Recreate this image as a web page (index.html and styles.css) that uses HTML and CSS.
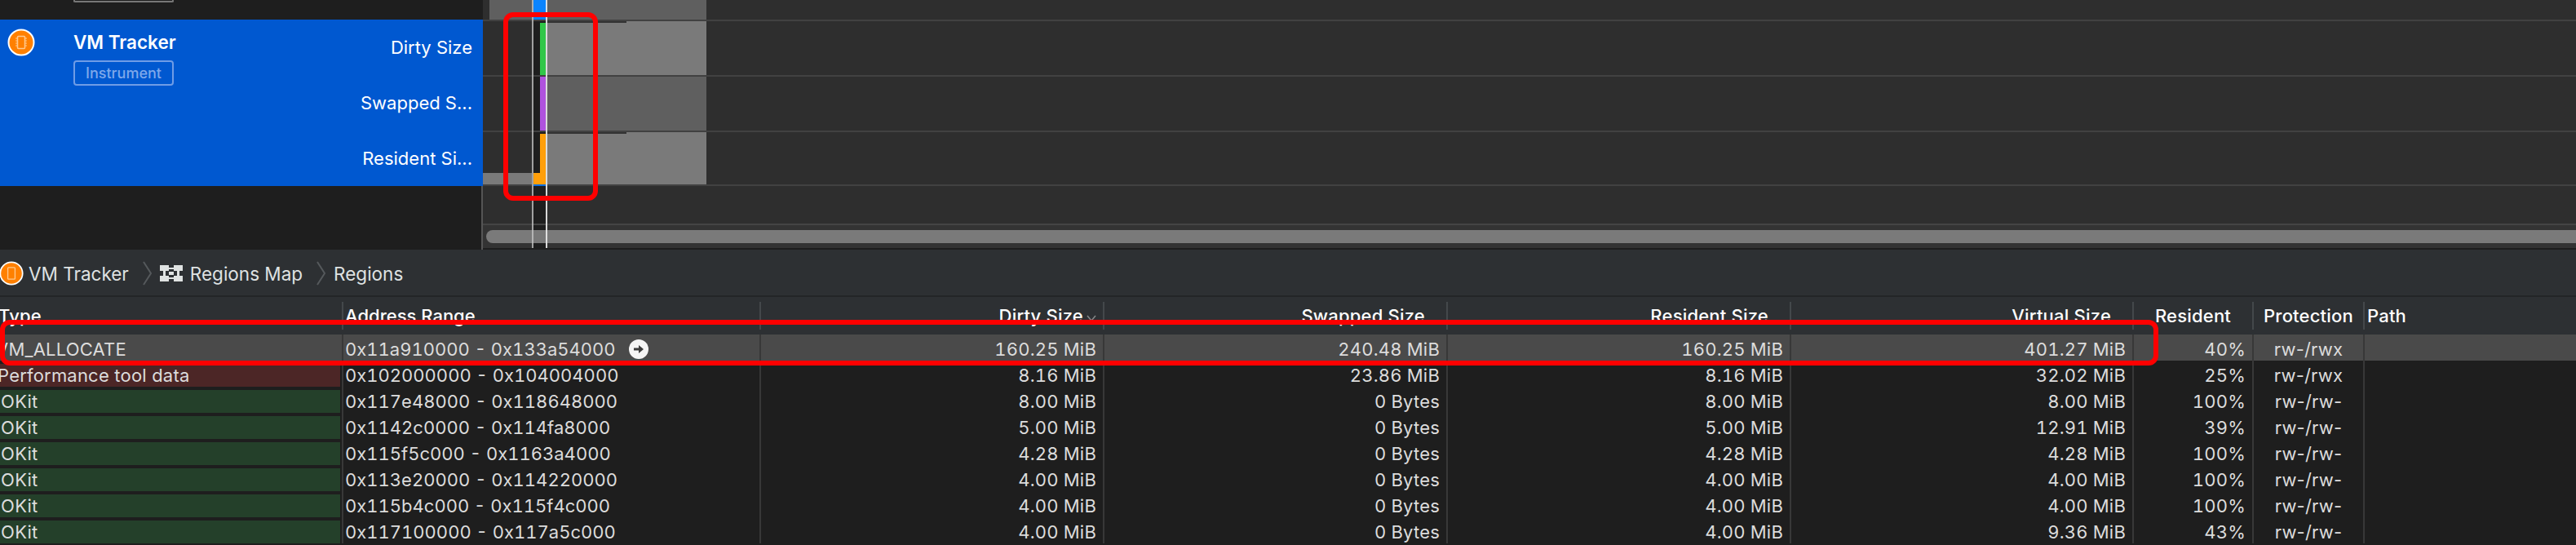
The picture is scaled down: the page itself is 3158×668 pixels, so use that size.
FILE: index.html
```html
<!DOCTYPE html>
<html lang="en">
<head>
<meta charset="UTF-8">
<title>VM Tracker</title>
<link rel="stylesheet" href="styles.css">
</head>
<body>

<div class="timeline">
    <div class="tracks">
        <div class="tracks-top">
            <div class="badge badge-prev"></div>
        </div>
        <div class="track-selected">
            <div class="icon-wrap">
                <svg class="orange-icon" width="34" height="34" viewBox="0 0 34 34">
                    <circle cx="17" cy="17" r="15.5" fill="#ff8000" stroke="#fff" stroke-width="2"/>
                    <rect x="12.5" y="9.5" width="9" height="15" rx="1" fill="none" stroke="#ffc98f" stroke-width="1.5"/>
                    <path d="M10 12h2M10 15h2M10 18h2M10 21h2M22 12h2M22 15h2M22 18h2M22 21h2" stroke="#ffc98f" stroke-width="1"/>
                </svg>
            </div>
            <div class="track-info">
                <div class="track-name">VM Tracker</div>
                <div class="badge">Instrument</div>
            </div>
            <div class="track-labels">
                <div>Dirty Size</div>
                <div>Swapped S...</div>
                <div>Resident Si...</div>
            </div>
        </div>
        <div class="tracks-rest"></div>
    </div>

    <div class="graph">
        <div class="lane lane-top">
            <div class="seg w8"></div>
            <div class="seg w54 mid"></div>
            <div class="col blue"></div>
            <div class="seg w196 mid"></div>
        </div>
        <div class="sep"></div>
        <div class="lane lane-1">
            <div class="seg w62"></div>
            <div class="col"><div class="bar green"></div></div>
            <div class="seg w98 light strip"></div>
            <div class="seg w98 light"></div>
        </div>
        <div class="sep"></div>
        <div class="lane lane-2">
            <div class="seg w62"></div>
            <div class="col"><div class="bar purple"></div></div>
            <div class="seg w196 mid"></div>
        </div>
        <div class="sep"></div>
        <div class="lane lane-3">
            <div class="seg w62"><div class="foot"></div></div>
            <div class="col"><div class="step"></div><div class="bar orange"></div></div>
            <div class="seg w98 light strip"></div>
            <div class="seg w98 light"></div>
        </div>
        <div class="sep sep-last"><div class="sep-blue"></div></div>
        <div class="lane lane-empty">
            <div class="seg w62"></div>
            <div class="col"></div>
        </div>
        <div class="scroll-row">
            <div class="seg w62"></div>
            <div class="col"></div>
            <div class="thumb"></div>
        </div>
        <div class="line line-a"></div>
        <div class="line line-b"></div>
    </div>
</div>

<div class="crumbs">
    <svg class="orange-icon crumb-icon" width="30" height="30" viewBox="0 0 34 34">
        <circle cx="17" cy="17" r="15.5" fill="#ff8000" stroke="#fff" stroke-width="2"/>
        <rect x="12" y="9" width="10" height="16" rx="1" fill="none" stroke="#ffc98f" stroke-width="1.5"/>
    </svg>
    <span>VM Tracker</span>
    <svg class="chevron" width="12" height="30" viewBox="0 0 12 30"><path d="M1 1l9 14-9 14" fill="none" stroke="#55595c" stroke-width="2"/></svg>
    <svg class="map-icon" width="28" height="20" viewBox="0 0 28 20" fill="#dfe2e2">
        <rect x="0" y="0" width="11" height="7"/>
        <rect x="17" y="0" width="11" height="7"/>
        <rect x="11" y="3" width="6" height="2"/>
        <rect x="4" y="7" width="3" height="6"/>
        <rect x="11" y="8" width="6" height="4"/>
        <rect x="21" y="7" width="3" height="6"/>
        <rect x="0" y="13" width="11" height="7"/>
        <rect x="17" y="13" width="11" height="7"/>
        <rect x="11" y="15" width="6" height="2"/>
    </svg>
    <span>Regions Map</span>
    <svg class="chevron" width="12" height="30" viewBox="0 0 12 30"><path d="M1 1l9 14-9 14" fill="none" stroke="#55595c" stroke-width="2"/></svg>
    <span>Regions</span>
</div>

<div class="table">
    <div class="row head">
        <div class="cell">Type</div>
        <div class="cell addr">Address Range</div>
        <div class="cell num sorted">Dirty Size<svg class="sort" width="12" height="8" viewBox="0 0 12 8"><path d="M1 1l5 6 5-6" fill="none" stroke="#85888a" stroke-width="1.5"/></svg></div>
        <div class="cell num">Swapped Size</div>
        <div class="cell num">Resident Size</div>
        <div class="cell num">Virtual Size</div>
        <div class="cell mid-text">Resident</div>
        <div class="cell mid-text">Protection</div>
        <div class="cell path">Path</div>
    </div>

    <div class="row selected">
        <div class="cell type">VM_ALLOCATE</div>
        <div class="cell addr">0x11a910000 - 0x133a54000
            <svg class="go" width="24" height="24" viewBox="0 0 24 24"><circle cx="12" cy="12" r="12" fill="#f5f5f5"/><path d="M6 10.500h6V7l6 5-6 5v-3.500H6z" fill="#3c3c3c"/></svg>
        </div>
        <div class="cell num">160.25 MiB</div>
        <div class="cell num">240.48 MiB</div>
        <div class="cell num">160.25 MiB</div>
        <div class="cell num">401.27 MiB</div>
        <div class="cell num">40%</div>
        <div class="cell mid-text">rw-/rwx</div>
        <div class="cell"></div>
    </div>
    <div class="row">
        <div class="cell type red-band">Performance tool data</div>
        <div class="cell addr">0x102000000 - 0x104004000</div>
        <div class="cell num">8.16 MiB</div>
        <div class="cell num">23.86 MiB</div>
        <div class="cell num">8.16 MiB</div>
        <div class="cell num">32.02 MiB</div>
        <div class="cell num">25%</div>
        <div class="cell mid-text">rw-/rwx</div>
        <div class="cell"></div>
    </div>
    <div class="row">
        <div class="cell type green-band">IOKit</div>
        <div class="cell addr">0x117e48000 - 0x118648000</div>
        <div class="cell num">8.00 MiB</div>
        <div class="cell num">0 Bytes</div>
        <div class="cell num">8.00 MiB</div>
        <div class="cell num">8.00 MiB</div>
        <div class="cell num">100%</div>
        <div class="cell mid-text">rw-/rw-</div>
        <div class="cell"></div>
    </div>
    <div class="row">
        <div class="cell type green-band">IOKit</div>
        <div class="cell addr">0x1142c0000 - 0x114fa8000</div>
        <div class="cell num">5.00 MiB</div>
        <div class="cell num">0 Bytes</div>
        <div class="cell num">5.00 MiB</div>
        <div class="cell num">12.91 MiB</div>
        <div class="cell num">39%</div>
        <div class="cell mid-text">rw-/rw-</div>
        <div class="cell"></div>
    </div>
    <div class="row">
        <div class="cell type green-band">IOKit</div>
        <div class="cell addr">0x115f5c000 - 0x1163a4000</div>
        <div class="cell num">4.28 MiB</div>
        <div class="cell num">0 Bytes</div>
        <div class="cell num">4.28 MiB</div>
        <div class="cell num">4.28 MiB</div>
        <div class="cell num">100%</div>
        <div class="cell mid-text">rw-/rw-</div>
        <div class="cell"></div>
    </div>
    <div class="row">
        <div class="cell type green-band">IOKit</div>
        <div class="cell addr">0x113e20000 - 0x114220000</div>
        <div class="cell num">4.00 MiB</div>
        <div class="cell num">0 Bytes</div>
        <div class="cell num">4.00 MiB</div>
        <div class="cell num">4.00 MiB</div>
        <div class="cell num">100%</div>
        <div class="cell mid-text">rw-/rw-</div>
        <div class="cell"></div>
    </div>
    <div class="row">
        <div class="cell type green-band">IOKit</div>
        <div class="cell addr">0x115b4c000 - 0x115f4c000</div>
        <div class="cell num">4.00 MiB</div>
        <div class="cell num">0 Bytes</div>
        <div class="cell num">4.00 MiB</div>
        <div class="cell num">4.00 MiB</div>
        <div class="cell num">100%</div>
        <div class="cell mid-text">rw-/rw-</div>
        <div class="cell"></div>
    </div>
    <div class="row">
        <div class="cell type green-band">IOKit</div>
        <div class="cell addr">0x117100000 - 0x117a5c000</div>
        <div class="cell num">4.00 MiB</div>
        <div class="cell num">0 Bytes</div>
        <div class="cell num">4.00 MiB</div>
        <div class="cell num">9.36 MiB</div>
        <div class="cell num">43%</div>
        <div class="cell mid-text">rw-/rw-</div>
        <div class="cell"></div>
    </div>
</div>

<!-- red annotation boxes drawn over the screenshot -->
<div class="mark mark-graph"></div>
<div class="mark mark-row"></div>

</body>
</html>
```

FILE: styles.css
```css
html, body {
    margin: 0;
    padding: 0;
}
body {
    position: relative;
    width: 3158px;
    height: 668px;
    overflow: hidden;
    background-color: #1e1e1e;
    font-family: Inter, "Liberation Sans", sans-serif;
    color: #dcdcdc;
}

/* top: track list + graph */
.timeline {
    display: flex;
    height: 306px;
}
.tracks {
    display: flex;
    flex-direction: column;
    width: 592px;
    flex-shrink: 0;
}
.tracks-top {
    height: 24px;
    padding-left: 90px;
}
.badge {
    box-sizing: border-box;
    width: 123px;
    height: 31px;
    border: 2px solid #6f9ce6;
    border-radius: 4px;
    color: #7fa8ea;
    font-size: 18px;
    font-weight: 500;
    line-height: 27px;
    text-align: center;
}
.badge-prev {
    height: 4px;
    margin-top: -1px;
    border: none;
    border-bottom: 2px solid #777;
    border-left: 2px solid #777;
    border-right: 2px solid #777;
}
.track-selected {
    display: flex;
    height: 204px;
    background-color: #0058d0;
    color: #fff;
}
.icon-wrap {
    width: 90px;
    padding: 11px 0 0 9px;
    box-sizing: border-box;
}
.orange-icon {
    display: block;
}
.track-info {
    padding-top: 16px;
}
.track-name {
    font-size: 22.500px;
    font-weight: 600;
    line-height: 24px;
    margin-bottom: 10px;
}
.track-labels {
    flex: 1;
    padding: 17px 13px 0 0;
    text-align: right;
    font-size: 22px;
}
.track-labels div {
    height: 68px;
    line-height: 34px;
}
.tracks-rest {
    flex: 1;
    border-right: 2px solid #555;
}

.graph {
    position: relative;
    flex: 1;
    display: flex;
    flex-direction: column;
    background-color: #2e2e2e;
    border-bottom: 2px solid #1e1e1e;
}
.lane {
    display: flex;
}
.lane-top { height: 24px; }
.lane-1 { height: 66px; }
.lane-2 { height: 66px; }
.lane-3 { height: 64px; }
.lane-empty { height: 46px; }
.sep {
    height: 2px;
    background-color: #414141;
}
.sep-last {
    padding-left: 62px;
}
.sep-blue {
    width: 16px;
    height: 2px;
    background-color: #0a6fe0;
}
.seg {
    box-sizing: border-box;
    flex-shrink: 0;
}
.w8 { width: 8px; }
.w54 { width: 54px; }
.w62 { width: 62px; display: flex; align-items: flex-end; }
.w98 { width: 98px; }
.w196 { width: 196px; }
.mid { background-color: #5f5f5f; }
.light { background-color: #7a7a7a; }
.strip { border-top: 2px solid #333; }
.foot {
    width: 60px;
    height: 14px;
    background-color: #7a7a7a;
}
.col {
    display: flex;
    justify-content: flex-end;
    align-items: flex-end;
    box-sizing: border-box;
    width: 16px;
    padding-right: 1px;
    flex-shrink: 0;
    background-color: #1e1e1e;
}
.col.blue {
    background-color: #0a84ff;
}
.bar {
    width: 7px;
    height: calc(100% - 2px);
}
.lane-2 .bar { height: 100%; }
.green { background-color: #30c748; }
.purple { background-color: #af52de; }
.orange { background-color: #ff9f0a; }
.step {
    width: 8px;
    height: 14px;
    background-color: #ff9f0a;
}
.scroll-row {
    position: relative;
    display: flex;
    flex: 1;
    box-sizing: border-box;
    border-top: 2px solid #444;
    background-color: #333;
}
.thumb {
    position: absolute;
    left: 4px;
    right: 0;
    top: 6px;
    height: 16px;
    border-radius: 8px 0 0 8px;
    background-color: rgba(130, 130, 130, 0.9);
}
.line {
    position: absolute;
    top: 0;
    bottom: 0;
    width: 2px;
}
.line-a {
    left: 60px;
    background-color: rgba(200, 200, 200, 0.75);
}
.line-b {
    left: 77px;
    background-color: rgba(235, 235, 235, 0.9);
}

/* breadcrumb */
.crumbs {
    display: flex;
    align-items: center;
    box-sizing: border-box;
    height: 58px;
    padding-top: 2px;
    background-color: #2d3033;
    border-bottom: 2px solid #232527;
    font-size: 22.500px;
    color: #dfe2e2;
}
.crumb-icon {
    margin: 0 6px 0 -1px;
}
.chevron {
    margin: 0 9px 0 17px;
}
.map-icon {
    margin-right: 9px;
}

/* table */
.table {
    font-size: 22px;
    letter-spacing: 0.2px;
}
.row {
    display: grid;
    grid-template-columns: 421px 512px 421px 421px 421px 420px 147px 136px 1fr;
    height: 32px;
}
.cell {
    box-sizing: border-box;
    display: flex;
    align-items: center;
    padding: 4px 8px 0 0;
    border-right: 2px solid #383838;
    white-space: nowrap;
    overflow: hidden;
}
.cell:last-child {
    border-right: none;
}
.num {
    justify-content: flex-end;
    font-variant-numeric: tabular-nums;
}
.mid-text {
    justify-content: center;
    padding-right: 0;
}
.addr {
    padding-left: 2px;
    font-variant-numeric: tabular-nums;
    letter-spacing: 0;
}
.go {
    margin-left: 16px;
}
.type {
    padding-left: 0;
    text-indent: -5px;
    background-clip: content-box;
}
.red-band {
    background-color: #4c2626;
    padding-right: 2px;
    text-indent: -3px;
}
.green-band {
    background-color: #24402a;
    padding-right: 2px;
}
.selected {
    background-color: #4a4a4a;
}
.head {
    height: 46px;
    background-color: #2d3033;
    color: #fff;
    font-weight: 500;
}
.head .cell {
    height: 34px;
    margin-top: 6px;
    padding-top: 0;
    border-color: #44484b;
}
.head .cell:first-child {
    text-indent: -2px;
}
.head .num {
    padding-right: 26px;
}
.head .sorted {
    padding-right: 8px;
}
.head .path {
    padding-left: 3px;
}
.sort {
    margin: 6px 0 0 4px;
}

/* annotations */
.mark {
    position: absolute;
    box-sizing: border-box;
    border: 6px solid #ff0000;
    border-radius: 12px;
}
.mark-graph {
    left: 617px;
    top: 15px;
    width: 116px;
    height: 231px;
}
.mark-row {
    left: 0;
    top: 392px;
    width: 2646px;
    height: 56px;
}
```
